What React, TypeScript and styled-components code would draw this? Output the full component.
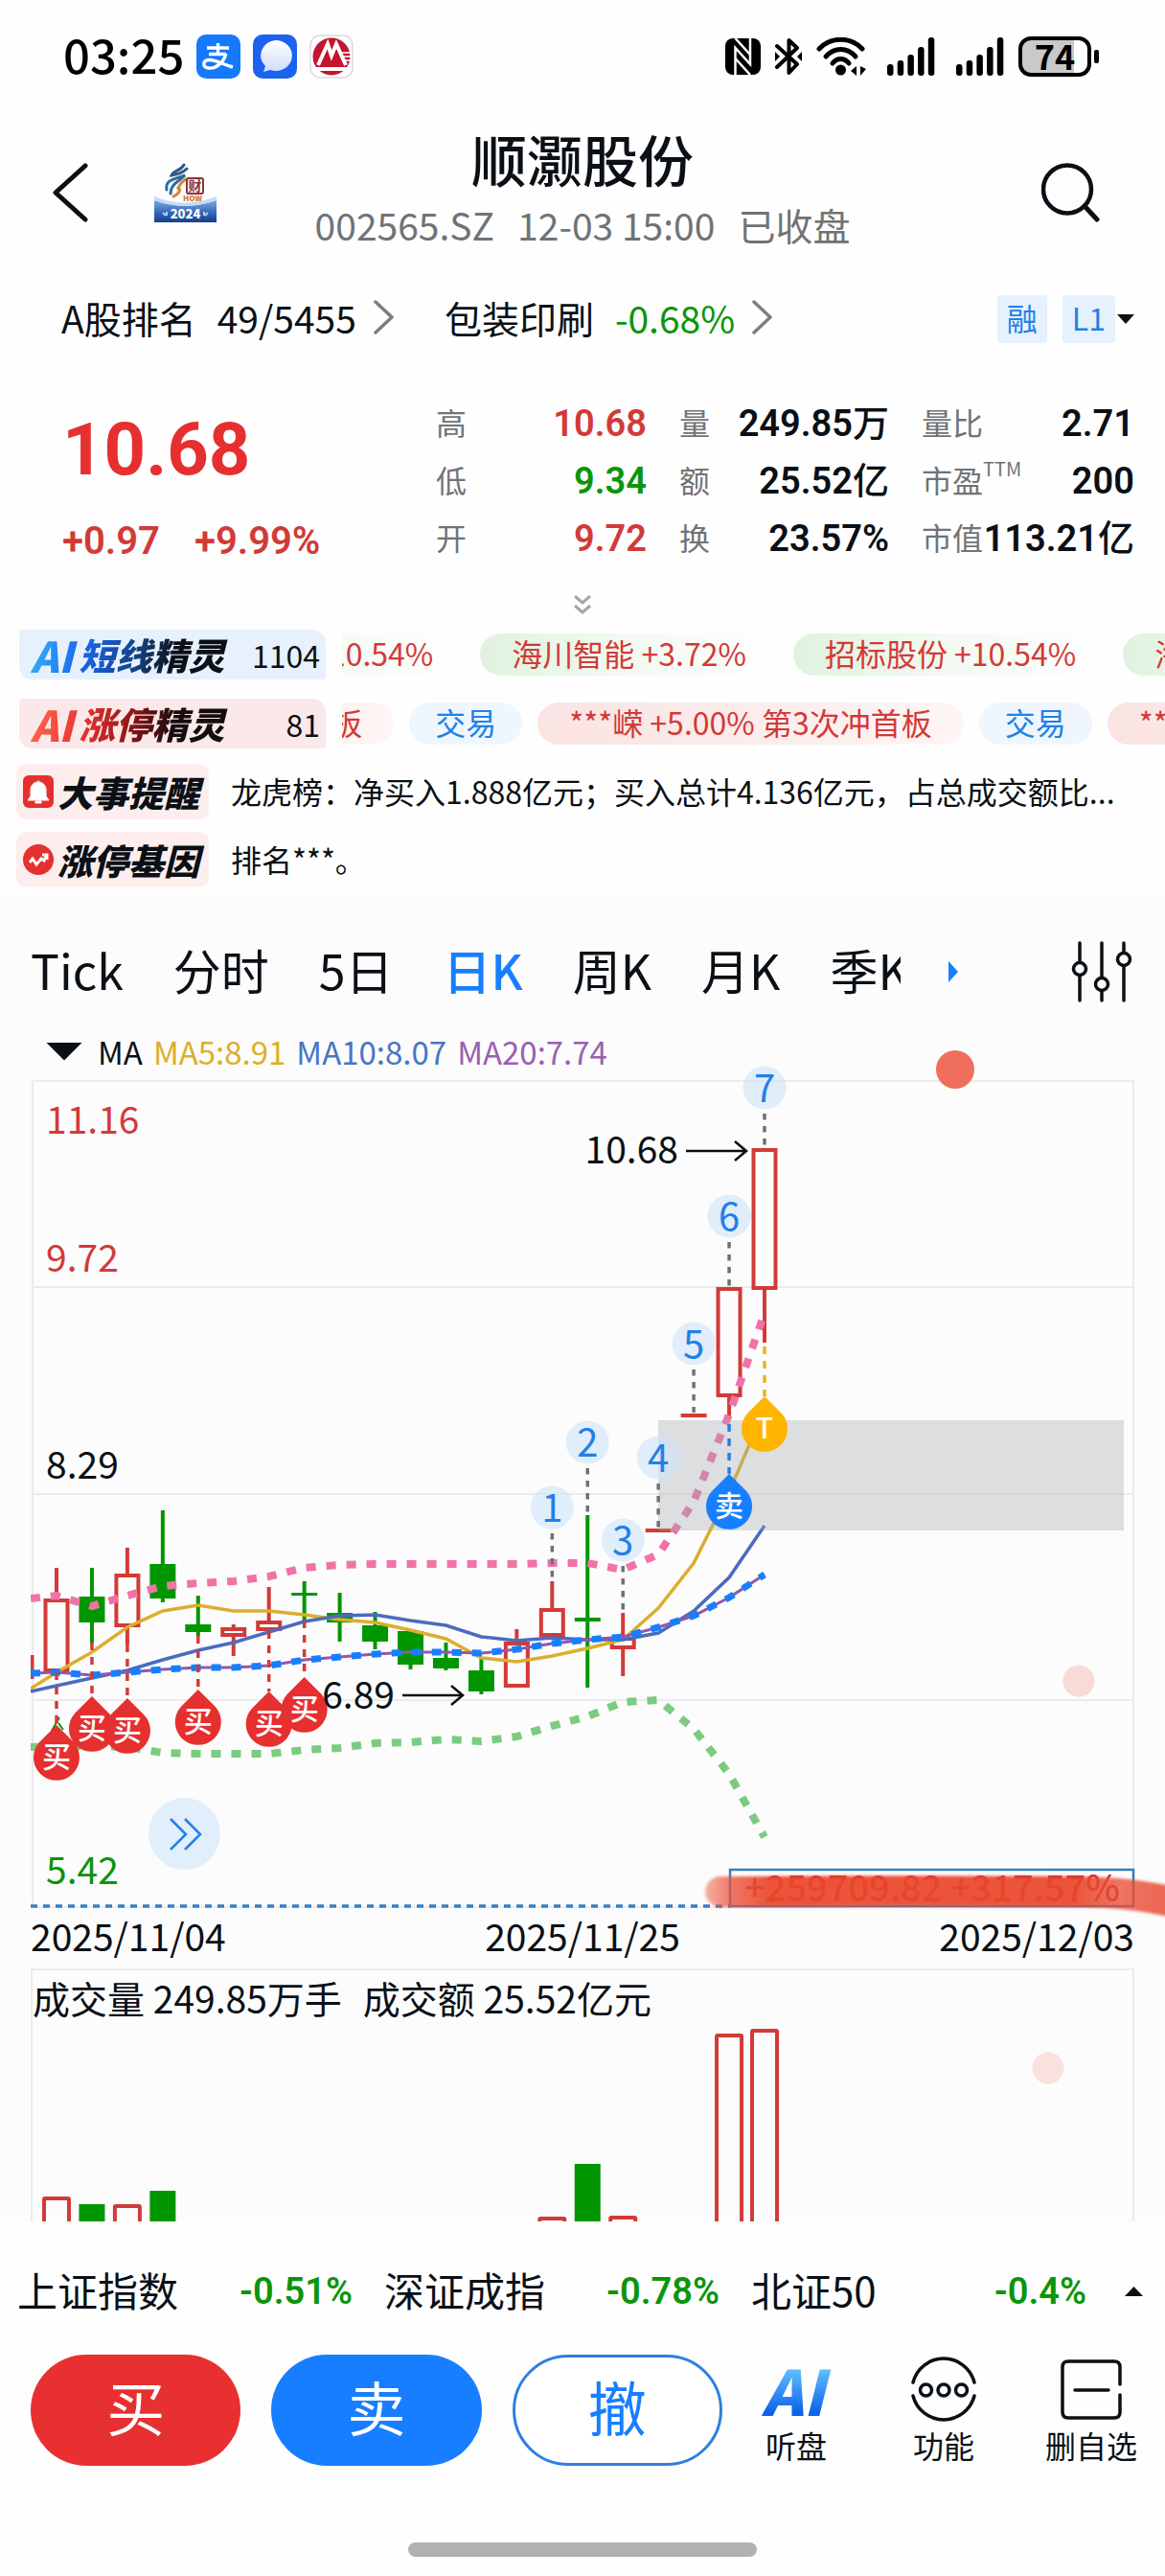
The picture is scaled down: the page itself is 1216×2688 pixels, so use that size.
import React from "react";
import styled, { createGlobalStyle, css } from "styled-components";

const c = {
  ink: "#0a1016",
  grey: "#707376",
  red: "#e62f2f",
  redText: "#d23a38",
  green: "#0b950b",
  fill: "#009600",
  blue: "#177fff",
  blueText: "#2280e6",
  panel: "#fcfcfc",
  line: "#ebebec",
  yellow: "#dcae2c",
};

const sans = `"Noto Sans CJK SC", "Noto Sans", sans-serif`;
const figures = `Roboto, "Noto Sans CJK SC", sans-serif`;

const Global = createGlobalStyle`
  * { box-sizing: border-box; }
  body { margin: 0; background: #fefefe; color: ${c.ink}; font-family: ${sans}; }
  button { margin: 0; padding: 0; border: 0; background: none; color: inherit; font: inherit; cursor: pointer; }
  svg { display: block; flex: none; }
`;

const Page = styled.div`
  min-height: 100vh;
  display: flex;
  flex-direction: column;
  overflow: hidden;
`;

/* ---------- status bar ---------- */

const StatusBar = styled.div`
  height: 118px;
  padding: 0 69px 0 66px;
  display: flex;
  align-items: center;
  justify-content: space-between;
`;
const StatusGroup = styled.div<{ $gap: number }>`
  display: flex;
  align-items: center;
  gap: ${(p) => p.$gap}px;
`;
const Clock = styled.time`
  padding-bottom: 6px;
  font-size: 49px;
  line-height: 60px;
  font-weight: 500;
  color: #000;
`;

const AlipayIcon = () => (
  <svg width="46" height="46" viewBox="0 0 46 46">
    <rect width="46" height="46" rx="10" fill="#1678fb" />
    <g fill="none" stroke="#fff" strokeWidth="3.4" strokeLinecap="butt">
      <path d="M11 14H34M22.5 9V20M13 20.5H31" />
      <path d="M31 20C28 30 20 36 12.5 35C6 34 6.5 27 13 26.5C20 26 27 31 38 34" />
    </g>
  </svg>
);
const MessageIcon = () => (
  <svg width="46" height="46" viewBox="0 0 46 46">
    <defs>
      <linearGradient id="msg" x1="0" y1="0" x2="0" y2="1">
        <stop offset="0" stopColor="#fff" />
        <stop offset="1" stopColor="#cfdcfb" />
      </linearGradient>
    </defs>
    <rect width="46" height="46" rx="10" fill="#1b62ef" />
    <path d="M23 6a17 16 0 1 1-5 31L11 39l2-6A17 16 0 0 1 23 6Z" fill="url(#msg)" />
  </svg>
);
const BankIcon = () => (
  <svg width="46" height="46" viewBox="0 0 46 46">
    <rect x="1" y="1" width="44" height="44" rx="10" fill="#fff" stroke="#dcdcdc" strokeWidth="1.5" />
    <circle cx="23" cy="23" r="19.5" fill="#c4152f" />
    <path d="M9 32L19 10L23 22L28 10L38 32M6 36H40" fill="none" stroke="#fff" strokeWidth="4" />
    <path d="M15 31L19 20L22 31ZM24 31L28 20L32 31Z" fill="#c4152f" />
    <path d="M33 19h11M34 23h10M36 27h7" stroke="#fff" strokeWidth="1.5" />
  </svg>
);
const NfcIcon = () => (
  <svg width="37" height="38" viewBox="0 0 37 38">
    <rect width="37" height="38" rx="8" fill="#000" />
    <path d="M10.5 38V10L26 27V0" fill="none" stroke="#fff" strokeWidth="2.5" />
    <path d="M10.5 0L26 17M10.5 21L26 38" fill="none" stroke="#fff" strokeWidth="2.5" />
  </svg>
);
const BluetoothIcon = () => (
  <svg width="28" height="40" viewBox="0 0 28 40">
    <path d="M2 9L23 28L14.5 37V3L23 11L2 31" fill="none" stroke="#000" strokeWidth="4" strokeLinejoin="round" strokeLinecap="round" />
    <path d="M0 15L5 20L0 25ZM28 15L23 20L28 25Z" fill="#000" />
  </svg>
);
const WifiIcon = () => (
  <svg width="52" height="40" viewBox="0 0 52 40">
    <g fill="none" stroke="#000" strokeWidth="5" strokeLinecap="round">
      <path d="M3 12C15-1 36-1 48 12" />
      <path d="M10 20C19 10 32 10 41 20" />
      <path d="M17 27C22 21 29 21 34 27" />
    </g>
    <circle cx="25.5" cy="34" r="5.5" fill="#000" />
    <path d="M42 30V40L36 35ZM46 30V40L52 33Z" fill="#000" />
  </svg>
);
const SignalSvg = styled.svg`
  margin-left: 7px;
`;
const SignalIcon = () => (
  <SignalSvg width="50" height="40" viewBox="0 0 50 40">
    {[12, 16, 22, 30, 40].map((h, i) => (
      <rect key={h} x={i * 10.7} y={40 - h} width="6.5" height={h} rx="3" fill="#000" />
    ))}
  </SignalSvg>
);
const Battery = styled.div`
  position: relative;
  width: 76px;
  height: 42px;
  margin-right: 8px;
  border: 4px solid #000;
  border-radius: 13px;
  background: linear-gradient(90deg, #c9c9c9 80%, #fff 80%);
  font-size: 36px;
  line-height: 31px;
  font-weight: 700;
  text-align: center;
  color: #000;
  &::after {
    content: "";
    position: absolute;
    right: -12px;
    top: 10px;
    width: 5px;
    height: 14px;
    border-radius: 2px;
    background: #000;
  }
`;

/* ---------- title ---------- */

const Header = styled.header`
  display: grid;
  grid-template-columns: 1fr auto 1fr;
  align-items: center;
  padding: 12px 54px 31px;
`;
const HeaderSide = styled.div<{ $end?: boolean }>`
  display: flex;
  align-items: center;
  gap: 69px;
  padding: 12px ${(p) => (p.$end ? 14 : 0)}px 0 0;
  justify-content: ${(p) => (p.$end ? "flex-end" : "flex-start")};
`;
const TitleBlock = styled.div`
  text-align: center;
`;
const StockName = styled.h1`
  margin: 0 0 9px;
  font-size: 58px;
  line-height: 70px;
  font-weight: 500;
`;
const StockMeta = styled.p`
  margin: 0;
  display: flex;
  gap: 24px;
  justify-content: center;
  font-size: 39px;
  line-height: 50px;
  color: ${c.grey};
`;

const BackIcon = () => (
  <svg width="38" height="62" viewBox="0 0 38 62">
    <path d="M35 3L4 31L35 59" fill="none" stroke={c.ink} strokeWidth="5" strokeLinecap="round" strokeLinejoin="round" />
  </svg>
);
const SearchIcon = () => (
  <svg width="61" height="62" viewBox="0 0 61 62">
    <circle cx="27" cy="27.5" r="25" fill="none" stroke={c.ink} strokeWidth="4.5" />
    <path d="M45 45L58 59" stroke={c.ink} strokeWidth="5" strokeLinecap="round" />
  </svg>
);
const ShowLogo = () => (
  <svg width="65" height="62" viewBox="0 0 65 62">
    <defs>
      <linearGradient id="logo" x1="0" y1="0" x2="0" y2="1">
        <stop offset="0" stopColor="#7fa9e4" />
        <stop offset="0.6" stopColor="#2f63b4" />
        <stop offset="1" stopColor="#173f88" />
      </linearGradient>
    </defs>
    <g fill="none" strokeLinecap="round">
      <path d="M31 2C27 9 20 8 18 13C25 12 30 10 34 6" stroke="#2c5a86" strokeWidth="3" />
      <path d="M13 28C11 18 20 17 32 13C25 20 17 22 17 32" stroke="#2a6c9c" strokeWidth="3" />
      <path d="M33 17C24 23 28 24 24 27C30 26 25 33 20 35" stroke="#d6873a" strokeWidth="3" />
    </g>
    <rect x="34" y="16" width="17" height="16" rx="2" fill="none" stroke="#8b3538" strokeWidth="2" />
    <text x="42.5" y="29" textAnchor="middle" fontFamily={sans} fontWeight="700" fontSize="14" fill="#8b3538">财</text>
    <text x="40" y="40" textAnchor="middle" fontFamily={sans} fontWeight="900" fontSize="8" fill="#d2762e">HOW</text>
    <path d="M0 39Q32 50 65 39V62H0Z" fill="url(#logo)" />
    <path d="M0 35Q32 48 65 35V39Q32 51 0 39Z" fill="#c4dbf8" />
    <text x="32.5" y="58" textAnchor="middle" fontFamily={sans} fontWeight="900" fontSize="13" fill="#fff">2024</text>
    <path d="M9 52l3 3M13 51v4M53 55l3-3M52 51v4" stroke="#b4ccf0" strokeWidth="2" />
  </svg>
);

/* ---------- rank row ---------- */

const RankRow = styled.div`
  height: 86px;
  padding: 0 32px 0 64px;
  display: flex;
  align-items: center;
  font-size: 39px;
`;
const RankLink = styled.a`
  display: flex;
  align-items: center;
  gap: 22px;
  margin-right: 52px;
  padding-bottom: 4px;
  color: inherit;
  text-decoration: none;
  white-space: nowrap;
`;
const Arrowed = styled.span<{ $green?: boolean }>`
  display: flex;
  align-items: center;
  gap: 18px;
  color: ${(p) => (p.$green ? c.green : "inherit")};
`;
const Tags = styled.div`
  margin-left: auto;
  display: flex;
  align-items: center;
  gap: 16px;
`;
const Tag = styled.span`
  height: 50px;
  padding: 0 10px;
  border-radius: 4px;
  background: #e5f1fc;
  color: ${c.blueText};
  font-size: 32px;
  line-height: 46px;
`;
const TagMenu = styled.button`
  display: flex;
  align-items: center;
  gap: 2px;
`;
const ChevronRight = () => (
  <svg width="22" height="36" viewBox="0 0 22 36">
    <path d="M2 2L19 18L2 34" fill="none" stroke="#7c7f82" strokeWidth="3.5" strokeLinecap="round" strokeLinejoin="round" />
  </svg>
);

/* ---------- quote ---------- */

const Quote = styled.section`
  display: grid;
  grid-template-columns: 390fr 729fr;
  padding: 34px 32px 17px 65px;
`;
const PriceBlock = styled.div`
  padding-top: 13px;
  color: ${c.red};
  font-family: ${figures};
`;
const Price = styled.div`
  font-size: 76px;
  line-height: 92px;
  font-weight: 700;
`;
const Change = styled.div`
  display: flex;
  gap: 36px;
  margin-top: 20px;
  font-size: 40px;
  line-height: 60px;
  font-weight: 600;
  color: ${c.redText};
`;
const Stats = styled.dl`
  margin: 0;
  display: grid;
  grid-template-columns: minmax(0, 220fr) minmax(0, 219fr) minmax(0, 222fr);
  grid-auto-rows: 60px;
  column-gap: 34px;
`;
const Stat = styled.div`
  display: flex;
  align-items: center;
  justify-content: space-between;
  white-space: nowrap;
`;
const StatLabel = styled.dt`
  font-size: 32px;
  color: ${c.grey};
  display: flex;
`;
const Sup = styled.span`
  font-size: 20px;
  line-height: 24px;
`;
const StatValue = styled.dd<{ $tone?: string }>`
  margin: 0;
  padding-top: 4px;
  font-family: ${figures};
  font-size: 38px;
  line-height: 56px;
  font-weight: 600;
  color: ${(p) => p.$tone ?? c.ink};
`;
const Unit = styled.span`
  font-family: ${sans};
  line-height: 40px;
  font-weight: 500;
`;
const Expand = styled.button`
  align-self: center;
  width: 60px;
  height: 38px;
  display: grid;
  place-items: center;
`;

const stats: { label: string; value: string; unit?: string; tone?: string; sup?: string }[] = [
  { label: "高", value: "10.68", tone: c.redText },
  { label: "量", value: "249.85", unit: "万" },
  { label: "量比", value: "2.71" },
  { label: "低", value: "9.34", tone: c.green },
  { label: "额", value: "25.52", unit: "亿" },
  { label: "市盈", value: "200", sup: "TTM" },
  { label: "开", value: "9.72", tone: c.redText },
  { label: "换", value: "23.57%" },
  { label: "市值", value: "113.21", unit: "亿" },
];

/* ---------- alerts ---------- */

const Alerts = styled.section`
  padding: 7px 0 8px;
  display: flex;
  flex-direction: column;
`;
const AlertRow = styled.div<{ $h: number; $gap: number }>`
  height: ${(p) => p.$h}px;
  margin-bottom: ${(p) => p.$gap}px;
  display: flex;
  align-items: center;
`;
const AiBadge = styled.a<{ $red?: boolean }>`
  flex: none;
  width: 320px;
  height: 52px;
  margin: 0 17px 0 20px;
  padding: 0 6px 0 12px;
  display: flex;
  align-items: center;
  justify-content: space-between;
  border-radius: 4px 14px 2px 14px;
  background: ${(p) => (p.$red ? "#fbe8e8" : "#e7f0fd")};
  color: inherit;
  text-decoration: none;
  font-size: 32px;
  line-height: 48px;
`;
const AiTitle = styled.span<{ $red?: boolean }>`
  display: flex;
  align-items: center;
  gap: 6px;
  padding-right: 4px;
  font-size: 38px;
  line-height: 50px;
  font-weight: 900;
  font-style: italic;
  color: transparent;
  background: ${(p) =>
    p.$red
      ? "linear-gradient(100deg, #ff6a50, #e93232 28%, #8a1414 52%, #140c0e 72%)"
      : "linear-gradient(100deg, #35b4ff, #1765e8 28%, #14407c 55%, #0b1018 72%)"};
  background-clip: text;
  -webkit-background-clip: text;
  white-space: nowrap;
`;
const Ai = styled.span`
  font-size: 44px;
`;
const Ticker = styled.div`
  flex: 1;
  min-width: 0;
  overflow: hidden;
`;
const Track = styled.div<{ $shift: number }>`
  display: flex;
  gap: 16px;
  margin-left: -${(p) => p.$shift}px;
`;
const Pill = styled.a<{ $kind: "green" | "red" | "blue" }>`
  flex: none;
  height: 44px;
  border-radius: 22px;
  padding: 0 ${(p) => (p.$kind === "blue" ? 27 : 33)}px;
  font-size: 32px;
  line-height: 40px;
  white-space: nowrap;
  text-decoration: none;
  ${(p) =>
    p.$kind === "green" &&
    css`
      color: ${c.redText};
      background: linear-gradient(90deg, #e0f2df, #f3faf2 50%, #fefefe);
    `}
  ${(p) =>
    p.$kind === "red" &&
    css`
      color: ${c.redText};
      background: linear-gradient(90deg, #fae3e3, #fef5f5);
    `}
  ${(p) =>
    p.$kind === "blue" &&
    css`
      color: ${c.blueText};
      background: #eff6fe;
    `}
`;
const EventBadge = styled.span`
  flex: none;
  width: 201px;
  height: 58px;
  margin: 0 23px 0 17px;
  padding: 0 10px 0 7px;
  display: flex;
  align-items: center;
  justify-content: space-between;
  border-radius: 10px;
  background: #fdeeed;
  font-size: 37px;
  line-height: 54px;
  font-weight: 900;
  font-style: italic;
  white-space: nowrap;
`;
const EventText = styled.p`
  margin: 0;
  flex: 1;
  font-size: 32px;
  line-height: 54px;
  padding-bottom: 2px;
  white-space: nowrap;
`;
const BellIcon = () => (
  <svg width="32" height="34" viewBox="0 0 32 34">
    <rect width="32" height="34" rx="6" fill={c.red} />
    <path d="M16 5v2C21 7 24 11 24 15v7l3 4H5l3-4v-7C8 11 11 7 16 7M13 27h6v2h-6Z" fill="#fff" stroke="#fff" />
  </svg>
);
const TrendIcon = () => (
  <svg width="32" height="34" viewBox="0 0 32 34">
    <circle cx="16" cy="17" r="16" fill={c.red} />
    <path d="M7 20L10 16L14 22L19 16L22 18L25 12M20 12H25V17" fill="none" stroke="#fff" strokeWidth="3" />
  </svg>
);

/* ---------- tabs ---------- */

const ChartSection = styled.section`
  padding-top: 13px;
  background: ${c.panel};
`;
const TabBar = styled.div`
  height: 134px;
  display: flex;
  align-items: center;
`;
const Tabs = styled.nav`
  flex: 1;
  min-width: 0;
  overflow: hidden;
  margin-left: 32px;
  padding-bottom: 6px;
  display: flex;
  gap: 52px;
`;
const Tab = styled.button<{ $on?: boolean }>`
  flex: none;
  font-size: 50px;
  line-height: 70px;
  white-space: nowrap;
  color: ${(p) => (p.$on ? c.blue : c.ink)};
  font-weight: ${(p) => (p.$on ? 500 : 400)};
`;
const IconButton = styled.button<{ $w: number }>`
  flex: none;
  width: ${(p) => p.$w}px;
  height: 70px;
  display: grid;
  place-items: center;
`;
const TabTools = styled.div`
  display: flex;
  gap: 34px;
`;
const SlidersIcon = () => (
  <svg width="64" height="64" viewBox="0 0 64 64">
    <g fill={c.panel} stroke={c.ink} strokeWidth="3.5" strokeLinecap="round">
      <path d="M9 2V62M32 2V62M55 2V62" />
      <circle cx="9" cy="29" r="6.5" />
      <circle cx="32" cy="45" r="6.5" />
      <circle cx="55" cy="19" r="6.5" />
    </g>
  </svg>
);
const Legend = styled.div`
  height: 34px;
  padding: 0 0 2px 48px;
  display: flex;
  align-items: center;
  gap: 11px;
  font-size: 33px;
  line-height: 32px;
`;
const LegendMenu = styled.button`
  display: flex;
  align-items: center;
  gap: 16px;
`;
const LegendItem = styled.span<{ $tone: string }>`
  color: ${(p) => p.$tone};
`;
const Triangle = styled.span<{ $w: number; $h: number; $up?: boolean }>`
  width: ${(p) => p.$w}px;
  height: ${(p) => p.$h}px;
  background: ${c.ink};
  clip-path: ${(p) => (p.$up ? "polygon(50% 0, 100% 100%, 0 100%)" : "polygon(0 0, 100% 0, 50% 100%)")};
`;

/* ---------- candle chart ---------- */

const X0 = 59;
const STEP = 36.95;
const cx = (i: number) => X0 + STEP * i;

type Candle = [kind: "r" | "g", high: number, top: number, bottom: number, low: number];
const candles: Candle[] = [
  ["r", 1636, 1668, 1745, 1745],
  ["g", 1636, 1666, 1693, 1714],
  ["r", 1615, 1642, 1698, 1716],
  ["g", 1576, 1632, 1668, 1672],
  ["g", 1665, 1695, 1703, 1707],
  ["r", 1695, 1698, 1708, 1728],
  ["r", 1656, 1691, 1702, 1702],
  ["g", 1650, 1662, 1665, 1691],
  ["g", 1662, 1683, 1693, 1713],
  ["g", 1682, 1696, 1713, 1721],
  ["g", 1700, 1702, 1737, 1742],
  ["g", 1714, 1730, 1741, 1743],
  ["g", 1731, 1743, 1765, 1768],
  ["r", 1700, 1713, 1761, 1761],
  ["r", 1650, 1678, 1708, 1708],
  ["g", 1581, 1688, 1692, 1761],
  ["r", 1683, 1708, 1721, 1749],
  ["r", 1595, 1595, 1599, 1599],
  ["r", 1475, 1475, 1479, 1479],
  ["r", 1343, 1343, 1458, 1481],
  ["r", 1198, 1198, 1346, 1401],
];

const series = (ys: number[], start: number) =>
  [`32,${start}`, ...ys.map((y, i) => `${cx(i)},${y}`)].join(" ");

const ma5 = series(
  [1745, 1724, 1698, 1681, 1675, 1681, 1681, 1685, 1690, 1693, 1701, 1710, 1730, 1734, 1728, 1720, 1711, 1678, 1631, 1557, 1470],
  1762,
);
const ma10 = series(
  [1759, 1751, 1743, 1732, 1722, 1714, 1703, 1692, 1686, 1685, 1691, 1696, 1708, 1712, 1709, 1711, 1711, 1704, 1681, 1646, 1592],
  1765,
);
const ma20 = series(
  [1745, 1748, 1745, 1742, 1740, 1740, 1738, 1732, 1729, 1726, 1724, 1724, 1725, 1721, 1715, 1711, 1708, 1698, 1686, 1667, 1643],
  1746,
);
const upper = series(
  [1665, 1676, 1665, 1655, 1652, 1650, 1645, 1636, 1633, 1632, 1632, 1632, 1632, 1632, 1631, 1631, 1638, 1622, 1567, 1476, 1370],
  1668,
);
const lower = series(
  [1822, 1822, 1823, 1829, 1830, 1830, 1830, 1826, 1824, 1819, 1818, 1815, 1817, 1812, 1801, 1791, 1776, 1774, 1804, 1851, 1917],
  1823,
);

const signals = [
  { n: 1, i: 14, y: 1573, to: 1648 },
  { n: 2, i: 15, y: 1505, to: 1580 },
  { n: 3, i: 16, y: 1607, to: 1680 },
  { n: 4, i: 17, y: 1521, to: 1594 },
  { n: 5, i: 18, y: 1402, to: 1474 },
  { n: 6, i: 19, y: 1269, to: 1342 },
  { n: 7, i: 20, y: 1135, to: 1196 },
];
const markers = [
  { i: 0, tip: 1800, from: 1745, text: "买", tone: c.red, line: c.redText },
  { i: 1, tip: 1770, from: 1714, text: "买", tone: c.red, line: c.redText },
  { i: 2, tip: 1772, from: 1716, text: "买", tone: c.red, line: c.redText },
  { i: 4, tip: 1763, from: 1707, text: "买", tone: c.red, line: c.redText },
  { i: 6, tip: 1765, from: 1702, text: "买", tone: c.red, line: c.redText },
  { i: 7, tip: 1750, from: 1691, text: "买", tone: c.red, line: c.redText },
  { i: 19, tip: 1538, from: 1486, text: "卖", tone: c.blue, line: c.blueText },
  { i: 20, tip: 1457, from: 1405, text: "T", tone: "#ffb400", line: "#e8b423" },
];

const ChartBox = styled.div`
  position: relative;
`;
const ChartSvg = styled.svg`
  width: 100%;
  height: auto;
  overflow: visible;
  font-family: ${sans};
  font-size: 39px;
`;
const ScrollForward = styled.button`
  position: absolute;
  left: 155px;
  bottom: 44px;
  width: 75px;
  height: 75px;
  border-radius: 50%;
  background: #e1eefb;
  display: grid;
  place-items: center;
`;

const Marker = ({ x, tip, text, tone }: { x: number; tip: number; text: string; tone: string }) => (
  <g>
    <path d={`M${x} ${tip}L${x + 18} ${tip + 18}A24 24 0 1 1 ${x - 18} ${tip + 18}Z`} fill={tone} />
    <text x={x} y={tip + 44} textAnchor="middle" fontSize="30" fontWeight="500" fill="#fff">{text}</text>
  </g>
);

const CandleChart = () => (
  <ChartBox>
    <ChartSvg viewBox="0 1115 1216 880" role="img" aria-label="日K">
      <defs>
        <linearGradient id="brush" gradientUnits="userSpaceOnUse" x1="735" y1="0" x2="1216" y2="0">
          <stop offset="0" stopColor="#ee5b40" stopOpacity="0.45" />
          <stop offset="0.06" stopColor="#ea5038" stopOpacity="0.78" />
          <stop offset="0.14" stopColor="#e9472c" stopOpacity="0.93" />
          <stop offset="0.8" stopColor="#e9472c" stopOpacity="0.93" />
          <stop offset="0.9" stopColor="#ea4c34" stopOpacity="0.78" />
          <stop offset="1" stopColor="#ea5038" stopOpacity="0.86" />
        </linearGradient>
        <filter id="soft" filterUnits="userSpaceOnUse" x="700" y="1930" width="560" height="100">
          <feGaussianBlur stdDeviation="1.5" />
        </filter>
        <clipPath id="plot">
          <rect x="32" y="1115" width="1184" height="880" />
        </clipPath>
      </defs>

      <g fill="none" stroke={c.line} strokeWidth="2">
        <path d="M34 1128H1183V1990H34Z" />
        <path d="M34 1343H1183M34 1559H1183M34 1774H1183" />
      </g>

      <text x="48" y="1183" fill={c.redText}>11.16</text>
      <text x="48" y="1327" fill={c.redText}>9.72</text>
      <text x="48" y="1543" fill={c.ink}>8.29</text>
      <text x="48" y="1966" fill={c.green}>5.42</text>

      <g clipPath="url(#plot)">
        <path d="M33 1727V1752" stroke={c.redText} strokeWidth="5" />
        {candles.map(([kind, high, top, bottom, low], i) => {
          const x = cx(i);
          const tone = kind === "r" ? c.redText : c.fill;
          return (
            <g key={i} stroke={tone} strokeWidth="4">
              <path d={`M${x} ${high}V${top}M${x} ${bottom}V${low}`} />
              {kind === "r" && bottom - top > 5 ? (
                <rect x={x - 11.5} y={top + 2} width="23" height={bottom - top - 4} fill={c.panel} />
              ) : (
                <rect x={x - 13.5} y={top} width="27" height={bottom - top} fill={tone} stroke="none" />
              )}
            </g>
          );
        })}
        <g fill="none">
          <polyline points={ma5} stroke={c.yellow} strokeWidth="3.5" />
          <polyline points={ma10} stroke="#4a6cc0" strokeWidth="3.5" />
          <polyline points={ma20} stroke="#9159a8" strokeWidth="3" />
          <polyline points={ma20} stroke={c.blue} strokeWidth="7" strokeDasharray="10 11" />
          <polyline points={upper} stroke="#f073a8" strokeWidth="8" strokeDasharray="10 11" />
          <polyline points={lower} stroke="#7bcb80" strokeWidth="8" strokeDasharray="10 11" />
        </g>
      </g>

      <rect x="687" y="1482" width="486" height="115" fill="#a4a8ac" fillOpacity="0.36" />

      {signals.map((s) => (
        <g key={s.n}>
          <circle cx={cx(s.i)} cy={s.y} r="22.5" fill="#cfe3fa" fillOpacity="0.62" />
          <text x={cx(s.i)} y={s.y + 15} textAnchor="middle" fontSize="40" fill={c.blueText}>{s.n}</text>
          <path d={`M${cx(s.i)} ${s.y + 27}V${s.to}`} stroke="#6f7274" strokeWidth="3.5" strokeDasharray="6.5 6.5" />
        </g>
      ))}

      <path d="M54 1806L62 1792M61 1798L66 1805" stroke={c.fill} strokeWidth="2" />
      {markers.map((m) => (
        <g key={m.i}>
          <path d={`M${cx(m.i)} ${m.from}V${m.tip}`} stroke={m.line} strokeWidth="3.5" strokeDasharray="8 7" />
          <Marker x={cx(m.i)} tip={m.tip} text={m.text} tone={m.tone} />
        </g>
      ))}

      <g fill="none" stroke={c.ink} strokeWidth="2.5">
        <path d="M716 1201H779M767 1191L779 1201L767 1211" />
        <path d="M420 1769H483M471 1759L483 1769L471 1779" />
      </g>
      <text x="708" y="1214" textAnchor="end" fill={c.ink}>10.68</text>
      <text x="412" y="1783" textAnchor="end" fill={c.ink}>6.89</text>

      <path d="M32 1989H762" stroke="#3280c8" strokeWidth="3.5" strokeDasharray="7 6" />
      <rect x="762" y="1951" width="421" height="38" fill="none" stroke="#3280c0" strokeWidth="2.5" />
      <text x="973" y="1984" textAnchor="middle" fontSize="38" fill="#cc2a2a" fontWeight="500">+259709.82 +317.57%</text>
      <path d="M752 1974C760 1973 1100 1973 1130 1974C1170 1975 1190 1978 1222 1984" fill="none" stroke="url(#brush)" strokeWidth="32" filter="url(#soft)" strokeLinecap="round" />

      <circle cx="997" cy="1116" r="20" fill="#ef6f5c" />
      <circle cx="1126" cy="1754" r="16.5" fill="#f8dad7" />
    </ChartSvg>
    <ScrollForward aria-label="前进">
      <svg width="36" height="36" viewBox="0 0 36 36">
        <path d="M3 2L19 18L3 34M18 2L34 18L18 34" fill="none" stroke={c.blueText} strokeWidth="2.5" />
      </svg>
    </ScrollForward>
  </ChartBox>
);

const Dates = styled.div`
  height: 52px;
  padding: 0 32px;
  display: flex;
  justify-content: space-between;
  font-size: 39px;
  line-height: 48px;
`;

const VolumePanel = styled.div`
  margin: 7px 32px 0;
  border: 2px solid ${c.line};
  border-bottom: 0;
`;
const VolumeText = styled.div`
  display: flex;
  gap: 22px;
  padding-bottom: 2px;
  font-size: 39px;
  line-height: 57px;
  white-space: nowrap;
`;
const VolumeSvg = styled.svg`
  width: 100%;
  height: auto;
`;
const volumes: [i: number, kind: "r" | "g", top: number][] = [
  [0, "r", 2292],
  [1, "g", 2300],
  [2, "r", 2300],
  [3, "g", 2286],
  [14, "r", 2313],
  [15, "g", 2258],
  [16, "r", 2312],
  [19, "r", 2122],
  [20, "r", 2117],
];

/* ---------- bottom ---------- */

const Bottom = styled.footer`
  background: #fefefe;
  padding-top: 23px;
`;
const IndexBar = styled.div`
  height: 100px;
  padding-left: 18px;
  display: flex;
  align-items: center;
`;
const IndexGrid = styled.div`
  flex: 1;
  padding-bottom: 4px;
  display: grid;
  grid-template-columns: repeat(3, 1fr);
  column-gap: 33px;
`;
const IndexItem = styled.div`
  display: flex;
  align-items: center;
  justify-content: space-between;
  font-size: 42px;
  line-height: 60px;
  white-space: nowrap;
`;
const IndexChange = styled.span`
  padding-top: 4px;
  font-family: ${figures};
  font-size: 38px;
  line-height: 56px;
  font-weight: 600;
  color: ${c.green};
`;
const IndexToggle = styled.button`
  padding: 20px 23px 20px 40px;
  display: flex;
`;
const Actions = styled.div`
  display: flex;
  padding: 16px 0 0 32px;
`;
const TradeGroup = styled.div`
  flex: 722;
  display: grid;
  grid-template-columns: repeat(3, 1fr);
  gap: 32px;
`;
const Trade = styled.button<{ $kind: "buy" | "sell" | "cancel" }>`
  height: 116px;
  padding-bottom: 8px;
  border-radius: 58px;
  font-size: 61px;
  line-height: 100px;
  color: ${(p) => (p.$kind === "cancel" ? c.blue : "#fff")};
  background: ${(p) => ({ buy: "#e83030", sell: c.blue, cancel: "#fff" })[p.$kind]};
  border: ${(p) => (p.$kind === "cancel" ? "3px solid #2e80de" : "0")};
`;
const Tools = styled.div`
  flex: 462;
  display: grid;
  grid-template-columns: repeat(3, 1fr);
`;
const Tool = styled.button`
  display: grid;
  grid-template-rows: 72px 44px;
  place-items: center;
  font-size: 32px;
  line-height: 44px;
  white-space: nowrap;
`;
const AiMark = styled.span`
  padding: 0 10px 0 4px;
  font-size: 65px;
  line-height: 76px;
  font-weight: 900;
  font-style: italic;
  color: transparent;
  background: linear-gradient(180deg, #62c4ff 20%, #0f62ea 82%);
  background-clip: text;
  -webkit-background-clip: text;
`;
const HomeArea = styled.div`
  padding: 80px 0 20px;
  display: flex;
  justify-content: center;
`;
const HomeBar = styled.div`
  width: 30%;
  height: 15px;
  border-radius: 8px;
  background: #b1b1b1;
`;

export default function App() {
  return (
    <Page>
      <Global />
      <StatusBar>
        <StatusGroup $gap={13}>
          <Clock>03:25</Clock>
          <AlipayIcon />
          <MessageIcon />
          <BankIcon />
        </StatusGroup>
        <StatusGroup $gap={15}>
          <NfcIcon />
          <BluetoothIcon />
          <WifiIcon />
          <SignalIcon />
          <SignalIcon />
          <Battery>74</Battery>
        </StatusGroup>
      </StatusBar>

      <Header>
        <HeaderSide>
          <button aria-label="返回"><BackIcon /></button>
          <ShowLogo />
        </HeaderSide>
        <TitleBlock>
          <StockName>顺灏股份</StockName>
          <StockMeta>
            <span>002565.SZ</span>
            <span>12-03 15:00</span>
            <span>已收盘</span>
          </StockMeta>
        </TitleBlock>
        <HeaderSide $end>
          <button aria-label="搜索"><SearchIcon /></button>
        </HeaderSide>
      </Header>

      <RankRow>
        <RankLink href="#rank">
          <span>A股排名</span>
          <Arrowed>49/5455<ChevronRight /></Arrowed>
        </RankLink>
        <RankLink href="#sector">
          <span>包装印刷</span>
          <Arrowed $green>-0.68%<ChevronRight /></Arrowed>
        </RankLink>
        <Tags>
          <Tag>融</Tag>
          <TagMenu>
            <Tag>L1</Tag>
            <Triangle $w={18} $h={10} />
          </TagMenu>
        </Tags>
      </RankRow>

      <Quote>
        <PriceBlock>
          <Price>10.68</Price>
          <Change>
            <span>+0.97</span>
            <span>+9.99%</span>
          </Change>
        </PriceBlock>
        <Stats>
          {stats.map((s) => (
            <Stat key={s.label}>
              <StatLabel>
                {s.label}
                {s.sup && <Sup>{s.sup}</Sup>}
              </StatLabel>
              <StatValue $tone={s.tone}>
                {s.value}
                {s.unit && <Unit>{s.unit}</Unit>}
              </StatValue>
            </Stat>
          ))}
        </Stats>
      </Quote>
      <Expand aria-label="展开">
        <svg width="18" height="20" viewBox="0 0 18 20">
          <path d="M1 1L9 8L17 1M1 11L9 18L17 11" fill="none" stroke="#a2a7ae" strokeWidth="3" />
        </svg>
      </Expand>

      <Alerts>
        <AlertRow $h={52} $gap={20}>
          <AiBadge href="#short">
            <AiTitle><Ai>AI</Ai>短线精灵</AiTitle>
            1104
          </AiBadge>
          <Ticker>
            <Track $shift={200}>
              <Pill $kind="green" href="#t1">招标股份 +10.54%</Pill>
              <Pill $kind="green" href="#t2">海川智能 +3.72%</Pill>
              <Pill $kind="green" href="#t3">招标股份 +10.54%</Pill>
              <Pill $kind="green" href="#t4">海川智能 +3.72%</Pill>
            </Track>
          </Ticker>
        </AlertRow>
        <AlertRow $h={52} $gap={16}>
          <AiBadge $red href="#limit">
            <AiTitle $red><Ai>AI</Ai>涨停精灵</AiTitle>
            81
          </AiBadge>
          <Ticker>
            <Track $shift={390}>
              <Pill $kind="red" href="#l1">***嵘 +5.00% 第3次冲首板</Pill>
              <Pill $kind="blue" href="#l1t">交易</Pill>
              <Pill $kind="red" href="#l2">***嵘 +5.00% 第3次冲首板</Pill>
              <Pill $kind="blue" href="#l2t">交易</Pill>
              <Pill $kind="red" href="#l3">***嵘 +5.00% 第3次冲首板</Pill>
            </Track>
          </Ticker>
        </AlertRow>
        <AlertRow $h={58} $gap={13}>
          <EventBadge><BellIcon />大事提醒</EventBadge>
          <EventText>龙虎榜：净买入1.888亿元；买入总计4.136亿元，占总成交额比...</EventText>
        </AlertRow>
        <AlertRow $h={58} $gap={0}>
          <EventBadge><TrendIcon />涨停基因</EventBadge>
          <EventText>排名***。</EventText>
        </AlertRow>
      </Alerts>

      <ChartSection>
        <TabBar>
          <Tabs>
            {["Tick", "分时", "5日", "日K", "周K", "月K", "季K"].map((t) => (
              <Tab key={t} $on={t === "日K"}>{t}</Tab>
            ))}
          </Tabs>
          <TabTools>
            <IconButton $w={110} aria-label="更多周期">
              <svg width="10" height="22" viewBox="0 0 10 22">
                <path d="M0 0L10 11L0 22Z" fill={c.blue} />
              </svg>
            </IconButton>
            <IconButton $w={132} aria-label="设置"><SlidersIcon /></IconButton>
          </TabTools>
        </TabBar>
        <Legend>
          <LegendMenu><Triangle $w={38} $h={19} />MA</LegendMenu>
          <LegendItem $tone={c.yellow}>MA5:8.91</LegendItem>
          <LegendItem $tone="#4a74c4">MA10:8.07</LegendItem>
          <LegendItem $tone="#9a5fb2">MA20:7.74</LegendItem>
        </Legend>
        <CandleChart />
        <Dates>
          <span>2025/11/04</span>
          <span>2025/11/25</span>
          <span>2025/12/03</span>
        </Dates>
        <VolumePanel>
          <VolumeText>
            <span>成交量 249.85万手</span>
            <span>成交额 25.52亿元</span>
          </VolumeText>
          <VolumeSvg viewBox="34 2115 1148 203" role="img" aria-label="成交量">
            {volumes.map(([i, kind, top]) =>
              kind === "r" ? (
                <rect key={i} x={cx(i) - 13} y={top + 2} width="26" height="260" rx="1" fill="none" stroke={c.redText} strokeWidth="4" />
              ) : (
                <rect key={i} x={cx(i) - 13.5} y={top} width="27" height="260" fill={c.fill} />
              ),
            )}
            <circle cx="1094" cy="2158" r="16.5" fill="#f9e2de" />
          </VolumeSvg>
        </VolumePanel>
      </ChartSection>

      <Bottom>
        <IndexBar>
          <IndexGrid>
            <IndexItem>上证指数<IndexChange>-0.51%</IndexChange></IndexItem>
            <IndexItem>深证成指<IndexChange>-0.78%</IndexChange></IndexItem>
            <IndexItem>北证50<IndexChange>-0.4%</IndexChange></IndexItem>
          </IndexGrid>
          <IndexToggle aria-label="展开指数"><Triangle $w={19} $h={10} $up /></IndexToggle>
        </IndexBar>
        <Actions>
          <TradeGroup>
            <Trade $kind="buy">买</Trade>
            <Trade $kind="sell">卖</Trade>
            <Trade $kind="cancel">撤</Trade>
          </TradeGroup>
          <Tools>
            <Tool><AiMark>AI</AiMark>听盘</Tool>
            <Tool>
              <svg width="68" height="70" viewBox="0 0 68 70">
                <g fill="none" stroke={c.ink} strokeWidth="3.5" strokeLinecap="round">
                  <path d="M2 28A33 33 0 0 1 66 28M2 42A33 33 0 0 0 66 42" />
                  <circle cx="15.5" cy="36" r="6" />
                  <circle cx="34" cy="36" r="6" />
                  <circle cx="52.5" cy="36" r="6" />
                </g>
              </svg>
              功能
            </Tool>
            <Tool>
              <svg width="64" height="63" viewBox="0 0 64 63">
                <path d="M62 26V8Q62 2 56 2H8Q2 2 2 8V55Q2 61 8 61H56Q62 61 62 55V37M15 32H50" fill="none" stroke={c.ink} strokeWidth="3.5" strokeLinecap="round" />
              </svg>
              删自选
            </Tool>
          </Tools>
        </Actions>
        <HomeArea><HomeBar /></HomeArea>
      </Bottom>
    </Page>
  );
}
